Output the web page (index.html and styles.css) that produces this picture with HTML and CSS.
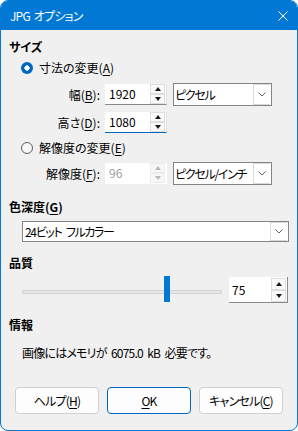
FILE: index.html
```html
<!DOCTYPE html>
<html lang="ja">
<head>
<meta charset="utf-8">
<link rel="stylesheet" href="styles.css">
</head>
<body>
<div class="window">
  <div class="titlebar">
    <span class="title">JPG オプション</span>
    <svg class="close" width="10" height="10" viewBox="0 0 10 10"><path d="M0.5 0.5 L9.5 9.5 M9.5 0.5 L0.5 9.5" stroke="#ffffff" stroke-width="1" fill="none"/></svg>
  </div>
  <div class="content">
    <div class="heading h-size">サイズ</div>
    <div class="radio-row r1"><span class="radio checked"></span><span>寸法の変更(<u>A</u>)</span></div>
    <div class="field-row fr-w">
      <span class="flabel">幅(<u>B</u>):</span>
      <div class="spin"><span class="val">1920</span><div class="spinbtns"><span class="sb"><i class="tri up"></i></span><span class="sb"><i class="tri down"></i></span></div></div>
      <div class="combo small"><span class="ctext">ピクセル</span><span class="cbtn"><svg width="8" height="5" viewBox="0 0 8 5"><polyline points="0.5,0.5 4,4 7.5,0.5" fill="none" stroke="#606060" stroke-width="1"/></svg></span></div>
    </div>
    <div class="field-row fr-h">
      <span class="flabel">高さ(<u>D</u>):</span>
      <div class="spin focused"><span class="val">1080</span><div class="spinbtns"><span class="sb"><i class="tri up"></i></span><span class="sb"><i class="tri down"></i></span></div></div>
    </div>
    <div class="radio-row r2"><span class="radio"></span><span>解像度の変更(<u>E</u>)</span></div>
    <div class="field-row fr-r">
      <span class="flabel">解像度(<u>F</u>):</span>
      <div class="spin disabled"><span class="val">96</span><div class="spinbtns"><span class="sb"><i class="tri up"></i></span><span class="sb"><i class="tri down"></i></span></div></div>
      <div class="combo small"><span class="ctext">ピクセル/インチ</span><span class="cbtn"><svg width="8" height="5" viewBox="0 0 8 5"><polyline points="0.5,0.5 4,4 7.5,0.5" fill="none" stroke="#606060" stroke-width="1"/></svg></span></div>
    </div>
    <div class="heading h-depth">色深度(<u>G</u>)</div>
    <div class="combo wide"><span class="ctext">24ビット フルカラー</span><span class="cbtn"><svg width="8" height="5" viewBox="0 0 8 5"><polyline points="0.5,0.5 4,4 7.5,0.5" fill="none" stroke="#606060" stroke-width="1"/></svg></span></div>
    <div class="heading h-quality">品質</div>
    <div class="slider-row">
      <div class="slider"><div class="track"></div><div class="thumb"></div></div>
      <div class="spin q"><span class="val">75</span><div class="spinbtns"><span class="sb"><i class="tri up"></i></span><span class="sb"><i class="tri down"></i></span></div></div>
    </div>
    <div class="heading h-info">情報</div>
    <div class="info">画像にはメモリが 6075.0 kB 必要です。</div>
    <div class="buttons">
      <button class="btn">ヘルプ(<u>H</u>)</button>
      <button class="btn default"><u>O</u>K</button>
      <button class="btn">キャンセル(<u>C</u>)</button>
    </div>
  </div>
</div>
</body>
</html>
```
FILE: styles.css
```css
* { box-sizing: border-box; }
html, body { margin: 0; padding: 0; background: #ffffff; }
body {
  font-family: "Noto Sans CJK JP", "Noto Sans", sans-serif;
  font-size: 12px;
  color: #000000;
  font-feature-settings: "palt" 1;
}
u { text-decoration: underline; text-underline-offset: 2px; }

.window {
  width: 298px;
  height: 431px;
  border: 1px solid #0078d4;
  border-radius: 8px;
  background: #f0f0f0;
  overflow: hidden;
  display: flex;
  flex-direction: column;
}
.titlebar {
  height: 29px;
  flex: none;
  background: #0078d4;
  display: flex;
  align-items: center;
  justify-content: space-between;
  padding: 0 9px 0 9px;
  color: #ffffff;
}
.title { font-size: 12px; line-height: 16px; letter-spacing: -0.8px; word-spacing: 2px; }
.close { display: block; }

.content {
  flex: 1;
  display: flex;
  flex-direction: column;
  padding: 0 9px 0 8px;
}
.heading { font-weight: 700; height: 16px; line-height: 16px; }
.h-size { margin-top: 9px; }
.h-depth { margin-top: 14px; }
.h-quality { margin-top: 13px; }
.h-info { margin-top: 14px; }

.radio-row {
  display: flex;
  align-items: center;
  height: 16px;
  line-height: 16px;
  padding-left: 12px;
  gap: 6px;
}
.r1 { margin-top: 5px; }
.r2 { margin-top: 7px; }
.radio {
  width: 12px;
  height: 12px;
  border-radius: 50%;
  border: 1px solid #5c5c5c;
  background: #f7f7f7;
  flex: none;
}
.radio.checked {
  border: none;
  background: radial-gradient(circle, #ffffff 0, #ffffff 2.4px, #0067c0 2.9px);
}

.field-row {
  display: flex;
  align-items: center;
  padding-left: 12px;
}
.fr-w { height: 23px; margin-top: 7px; }
.fr-h { height: 21px; margin-top: 6px; }
.fr-r { height: 23px; margin-top: 6px; }
.flabel {
  width: 80px;
  text-align: right;
  padding-right: 1px;
  margin-right: 4px;
  line-height: 16px;
}
.spin {
  width: 62px;
  height: 21px;
  background: #ffffff;
  border-bottom: 1px solid #8a8a8a;
  border-right: 1px solid #e2e2e2;
  display: flex;
  align-items: center;
  justify-content: space-between;
  padding-left: 4px;
  padding-right: 1px;
}
.spin.focused { border-bottom: 1px solid #0067c0; }
.spin.disabled { border-bottom: 1px solid #ffffff; border-right: 1px solid #ffffff; }
.spin.disabled .val { color: #a0a0a0; }
.val { line-height: 16px; }
.spinbtns {
  display: flex;
  flex-direction: column;
  width: 15px;
}
.sb {
  height: 10px;
  border: 1px solid #dedede;
  background: #fafafa;
  display: flex;
  align-items: center;
  justify-content: center;
}
.tri { display: block; width: 0; height: 0; border-left: 3px solid transparent; border-right: 3px solid transparent; }
.tri.up { border-bottom: 4px solid #1a1a1a; }
.tri.down { border-top: 4px solid #1a1a1a; }
.spin.disabled .sb { border-color: #ececec; background: #f7f7f7; }
.spin.disabled .tri.up { border-bottom-color: #b8b8b8; }
.spin.disabled .tri.down { border-top-color: #b8b8b8; }

.combo {
  background: #ffffff;
  border: 1px solid #858585;
  display: flex;
  align-items: center;
  justify-content: space-between;
  padding-left: 1px;
  padding-right: 1px;
}
.combo.small { width: 99px; height: 23px; margin-left: 6px; }
.combo.wide { width: 267px; height: 21px; margin-left: 13px; margin-top: 6px; padding-left: 2px; }
.ctext { line-height: 16px; white-space: nowrap; letter-spacing: -1.3px; word-spacing: 3px; }
.cbtn {
  width: 17px;
  height: 100%;
  border: 1px solid #d9d9d9;
  border-right: none;
  display: flex;
  align-items: center;
  justify-content: center;
  background: #ffffff;
}
.combo.wide .cbtn { height: 19px; }
.cbtn svg { display: block; }

.slider-row {
  display: flex;
  align-items: center;
  margin-top: 6px;
  padding-left: 13px;
  height: 26px;
}
.slider {
  position: relative;
  width: 200px;
  height: 26px;
  display: flex;
  align-items: center;
}
.track {
  width: 200px;
  height: 4px;
  background: #e6e6e6;
  border: 1px solid #d3d3d3;
  margin-top: 3px;
}
.thumb {
  position: absolute;
  left: 142px;
  top: -1px;
  width: 6px;
  height: 26px;
  background: #0078d4;
}
.spin.q {
  width: 60px;
  height: 26px;
  margin-left: 7px;
  border-bottom: 1px solid #8a8a8a;
  border-right: 1px solid #8a8a8a;
  padding-left: 3px;
}
.spin.q .sb { height: 12px; }

.info { margin-top: 12px; padding-left: 13px; height: 16px; line-height: 16px; letter-spacing: -0.8px; word-spacing: 2.5px; }

.buttons {
  margin-top: 26px;
  display: flex;
  gap: 8px;
  padding-left: 6px;
}
.btn {
  width: 84px;
  height: 27px;
  background: #fdfdfd;
  border: 1px solid #d0d0d0;
  border-radius: 4px;
  font-family: "Noto Sans CJK JP", "Noto Sans", sans-serif;
  font-feature-settings: "palt" 1;
  font-size: 12px;
  letter-spacing: -0.8px;
  color: #000000;
  padding: 0;
  line-height: 16px;
}
.btn.default { border: 1px solid #0067c0; }
```
